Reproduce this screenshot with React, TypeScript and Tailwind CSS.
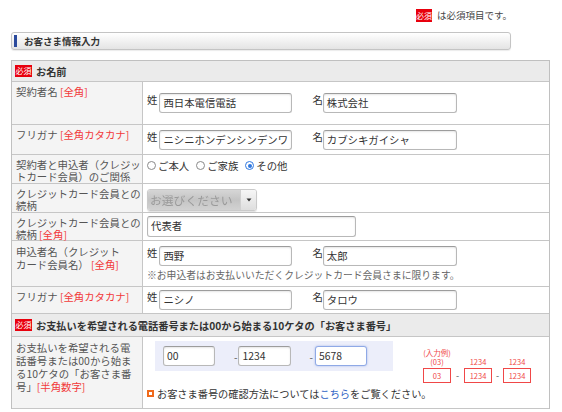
import type { ReactNode } from "react";

function Hissu({ className = "" }: { className?: string }) {
  return (
    <span
      className={`inline-flex shrink-0 items-center justify-center bg-[#e8000d] text-[8px] font-normal leading-none text-white ${className}`}
    >
      必須
    </span>
  );
}

function Req({ children }: { children: ReactNode }) {
  return <span className="text-[#f23a3a]">{children}</span>;
}

function TextBox({ value, className = "", focus = false }: { value: string; className?: string; focus?: boolean }) {
  return (
    <div
      className={`h-[20px] shrink-0 overflow-hidden whitespace-nowrap rounded-[3px] border bg-white pl-[3px] text-[10.4px] leading-[18px] text-[#333] ${
        focus
          ? "border-[#8fa9e6] shadow-[0_0_2px_rgba(80,120,220,0.5)]"
          : "border-[#b8b8b8] border-t-[#9c9c9c] shadow-[inset_0_1px_2px_rgba(0,0,0,0.1)]"
      } ${className}`}
    >
      {value}
    </div>
  );
}

function NameInputs({ sei, mei }: { sei: string; mei: string }) {
  return (
    <div className="flex items-start text-[10.4px] leading-[13px] text-[#333]">
      <span className="mr-[2px]">姓</span>
      <TextBox value={sei} className="w-[133px]" />
      <span className="ml-[20px]">名</span>
      <TextBox value={mei} className="w-[134px]" />
    </div>
  );
}

function Row({
  h,
  label,
  children,
  content = "items-center",
  lead = "leading-[12px]",
}: {
  h: string;
  label: ReactNode;
  children: ReactNode;
  content?: string;
  lead?: string;
}) {
  return (
    <div className={`flex border-b border-[#c6c6c6] ${h}`}>
      <div
        className={`w-[131px] shrink-0 border-r border-[#c6c6c6] bg-[#f4f4f4] pl-[4px] pt-[4px] text-[10.4px] text-[#555] ${lead}`}
      >
        {label}
      </div>
      <div className={`flex flex-1 pl-[4px] ${content}`}>{children}</div>
    </div>
  );
}

function SectionHead({ h, title }: { h: string; title: string }) {
  return (
    <div className={`flex items-center border-b border-[#c6c6c6] bg-[#ebebeb] pl-[3px] ${h}`}>
      <Hissu className="h-[12px] w-[17px]" />
      <span className="ml-[4px] text-[10.2px] font-bold leading-[13px] text-[#333]">{title}</span>
    </div>
  );
}

function Radio({ label, checked = false }: { label: string; checked?: boolean }) {
  return (
    <span className="flex items-center">
      {checked ? (
        <span className="flex h-[9px] w-[9px] items-center justify-center rounded-full border-[1.5px] border-[#2f78e0] bg-white">
          <span className="h-[4px] w-[4px] rounded-full bg-[#2f78e0]" />
        </span>
      ) : (
        <span className="h-[9px] w-[9px] rounded-full border border-[#8a8a8a] bg-white" />
      )}
      <span className="ml-[2px]">{label}</span>
    </span>
  );
}

function Dash({ className = "" }: { className?: string }) {
  return <span className={`text-[10px] text-[#555] ${className}`}>-</span>;
}

function Example() {
  const cell = "w-[28px] text-center";
  return (
    <div className="ml-[30px] mt-[7px] text-[7.5px] leading-[9px] text-[#f04848]">
      <div className="w-[28px] whitespace-nowrap text-center">(入力例)</div>
      <div className="flex">
        <span className={cell}>(03)</span>
        <span className="w-[13px]" />
        <span className={cell}>1234</span>
        <span className="w-[11px]" />
        <span className={cell}>1234</span>
      </div>
      <div className="mt-[2px] flex items-center">
        <span className="h-[15px] w-[28px] border border-[#f04848] text-center leading-[13px]">03</span>
        <span className="w-[13px] text-center text-[9px] text-[#555]">-</span>
        <span className="h-[15px] w-[28px] border border-[#f04848] text-center leading-[13px]">1234</span>
        <span className="w-[11px] text-center text-[9px] text-[#555]">-</span>
        <span className="h-[15px] w-[28px] border border-[#f04848] text-center leading-[13px]">1234</span>
      </div>
    </div>
  );
}

export default function App() {
  return (
    <div className="h-[412px] w-[562px] overflow-hidden bg-white font-['Noto_Sans_CJK_JP',sans-serif] text-[#333]">
      <div className="flex h-[22px] items-start pl-[416px] pt-[9px]">
        <Hissu className="h-[13px] w-[16px]" />
        <span className="ml-[5px] text-[9.5px] leading-[13px] text-[#444]">は必須項目です。</span>
      </div>

      <div className="ml-[11px] mt-[10px] flex h-[18px] w-[500px] items-center rounded-[3px] border border-[#c4c4c4] bg-linear-to-b from-white to-[#e4e4e4] shadow-[0_1px_1px_rgba(0,0,0,0.08)]">
        <span className="ml-[2px] h-[12px] w-[3px] bg-[#2b4a9c]" />
        <span className="ml-[7px] text-[9.5px] font-bold leading-[12px] text-[#333]">お客さま情報入力</span>
      </div>

      <div className="ml-[11px] mt-[10px] w-[539px] border-l border-r border-t border-[#c0c0c0]">
        <SectionHead h="h-[21px]" title="お名前" />

        <Row
          h="h-[43px]"
          label={
            <>
              契約者名 <Req>[全角]</Req>
            </>
          }
        >
          <NameInputs sei="西日本電信電話" mei="株式会社" />
        </Row>

        <Row
          h="h-[30px]"
          label={
            <>
              フリガナ <Req>[全角カタカナ]</Req>
            </>
          }
        >
          <NameInputs sei="ニシニホンデンシンデンワ" mei="カブシキガイシャ" />
        </Row>

        <Row
          h="h-[29px]"
          content="items-start pt-[4px]"
          label={
            <>
              契約者と申込者（クレジッ
              <br />
              トカード会員）のご関係
            </>
          }
        >
          <div className="flex items-center gap-[7px] text-[10.4px] leading-[13px] text-[#333]">
            <Radio label="ご本人" />
            <Radio label="ご家族" />
            <Radio label="その他" checked />
          </div>
        </Row>

        <Row
          h="h-[29px]"
          content="items-start pt-[5px]"
          label={
            <>
              クレジットカード会員との
              <br />
              続柄
            </>
          }
        >
          <div className="flex h-[22px] w-[110px] overflow-hidden rounded-[3px] border border-[#cacaca] shadow-[0_1px_1px_rgba(0,0,0,0.12)]">
            <div className="w-[92px] bg-linear-to-b from-[#d6d6d6] via-[#c4c4c4] to-[#d2d2d2] pl-[2px]">
              <span className="block whitespace-nowrap text-[11.8px] leading-[20px] text-[#9a9a9a] blur-[0.5px]">
                お選びください
              </span>
            </div>
            <div className="flex flex-1 items-center justify-center border-l border-[#d0d0d0] bg-linear-to-b from-[#f6f6f6] to-[#dedede]">
              <svg width="6" height="4" viewBox="0 0 6 4">
                <path d="M0.5 0.5 L5.5 0.5 L3 3.5 Z" fill="#333" />
              </svg>
            </div>
          </div>
        </Row>

        <Row
          h="h-[28px]"
          label={
            <>
              クレジットカード会員との
              <br />
              続柄 <Req>[全角]</Req>
            </>
          }
        >
          <TextBox value="代表者" className="w-[209px] h-[21px]" />
        </Row>

        <Row
          h="h-[46px]"
          lead="leading-[13px]"
          label={
            <>
              申込者名（クレジット
              <br />
              カード会員名） <Req>[全角]</Req>
            </>
          }
        >
          <div className="flex flex-col">
            <NameInputs sei="西野" mei="太郎" />
            <p className="mt-[3px] whitespace-nowrap text-[9.8px] leading-[13px] text-[#666]">
              ※お申込者はお支払いいただくクレジットカード会員さまに限ります。
            </p>
          </div>
        </Row>

        <Row
          h="h-[27px]"
          label={
            <>
              フリガナ <Req>[全角カタカナ]</Req>
            </>
          }
        >
          <NameInputs sei="ニシノ" mei="タロウ" />
        </Row>

        <SectionHead h="h-[23px]" title="お支払いを希望される電話番号または00から始まる10ケタの「お客さま番号」" />

        <Row
          h="h-[72px]"
          content="items-start pt-[4px]"
          lead="leading-[13px]"
          label={
            <>
              お支払いを希望される電
              <br />
              話番号または00から始ま
              <br />
              る10ケタの「お客さま番
              <br />
              号」<Req>[半角数字]</Req>
            </>
          }
        >
          <div className="flex flex-col">
            <div className="flex items-start">
              <div className="ml-[8px] flex h-[30px] w-[238px] items-center bg-[#eceefa] pl-[8px]">
                <TextBox value="00" className="w-[52px]" />
                <Dash className="ml-[19px] mr-[1px]" />
                <TextBox value="1234" className="w-[53px]" />
                <Dash className="ml-[18px] mr-[2px]" />
                <TextBox value="5678" className="w-[52px]" focus />
              </div>
              <Example />
            </div>
            <p className="mt-[4px] flex items-center whitespace-nowrap text-[10.2px] leading-[13px] text-[#333]">
              <span className="flex h-[7px] w-[7px] items-center justify-center bg-[#f06a1a]">
                <span className="h-[3px] w-[3px] bg-white" />
              </span>
              <span className="ml-[3px]">
                お客さま番号の確認方法については<span className="text-[#2f63c4]">こちら</span>をご覧ください。
              </span>
            </p>
          </div>
        </Row>
      </div>
    </div>
  );
}
